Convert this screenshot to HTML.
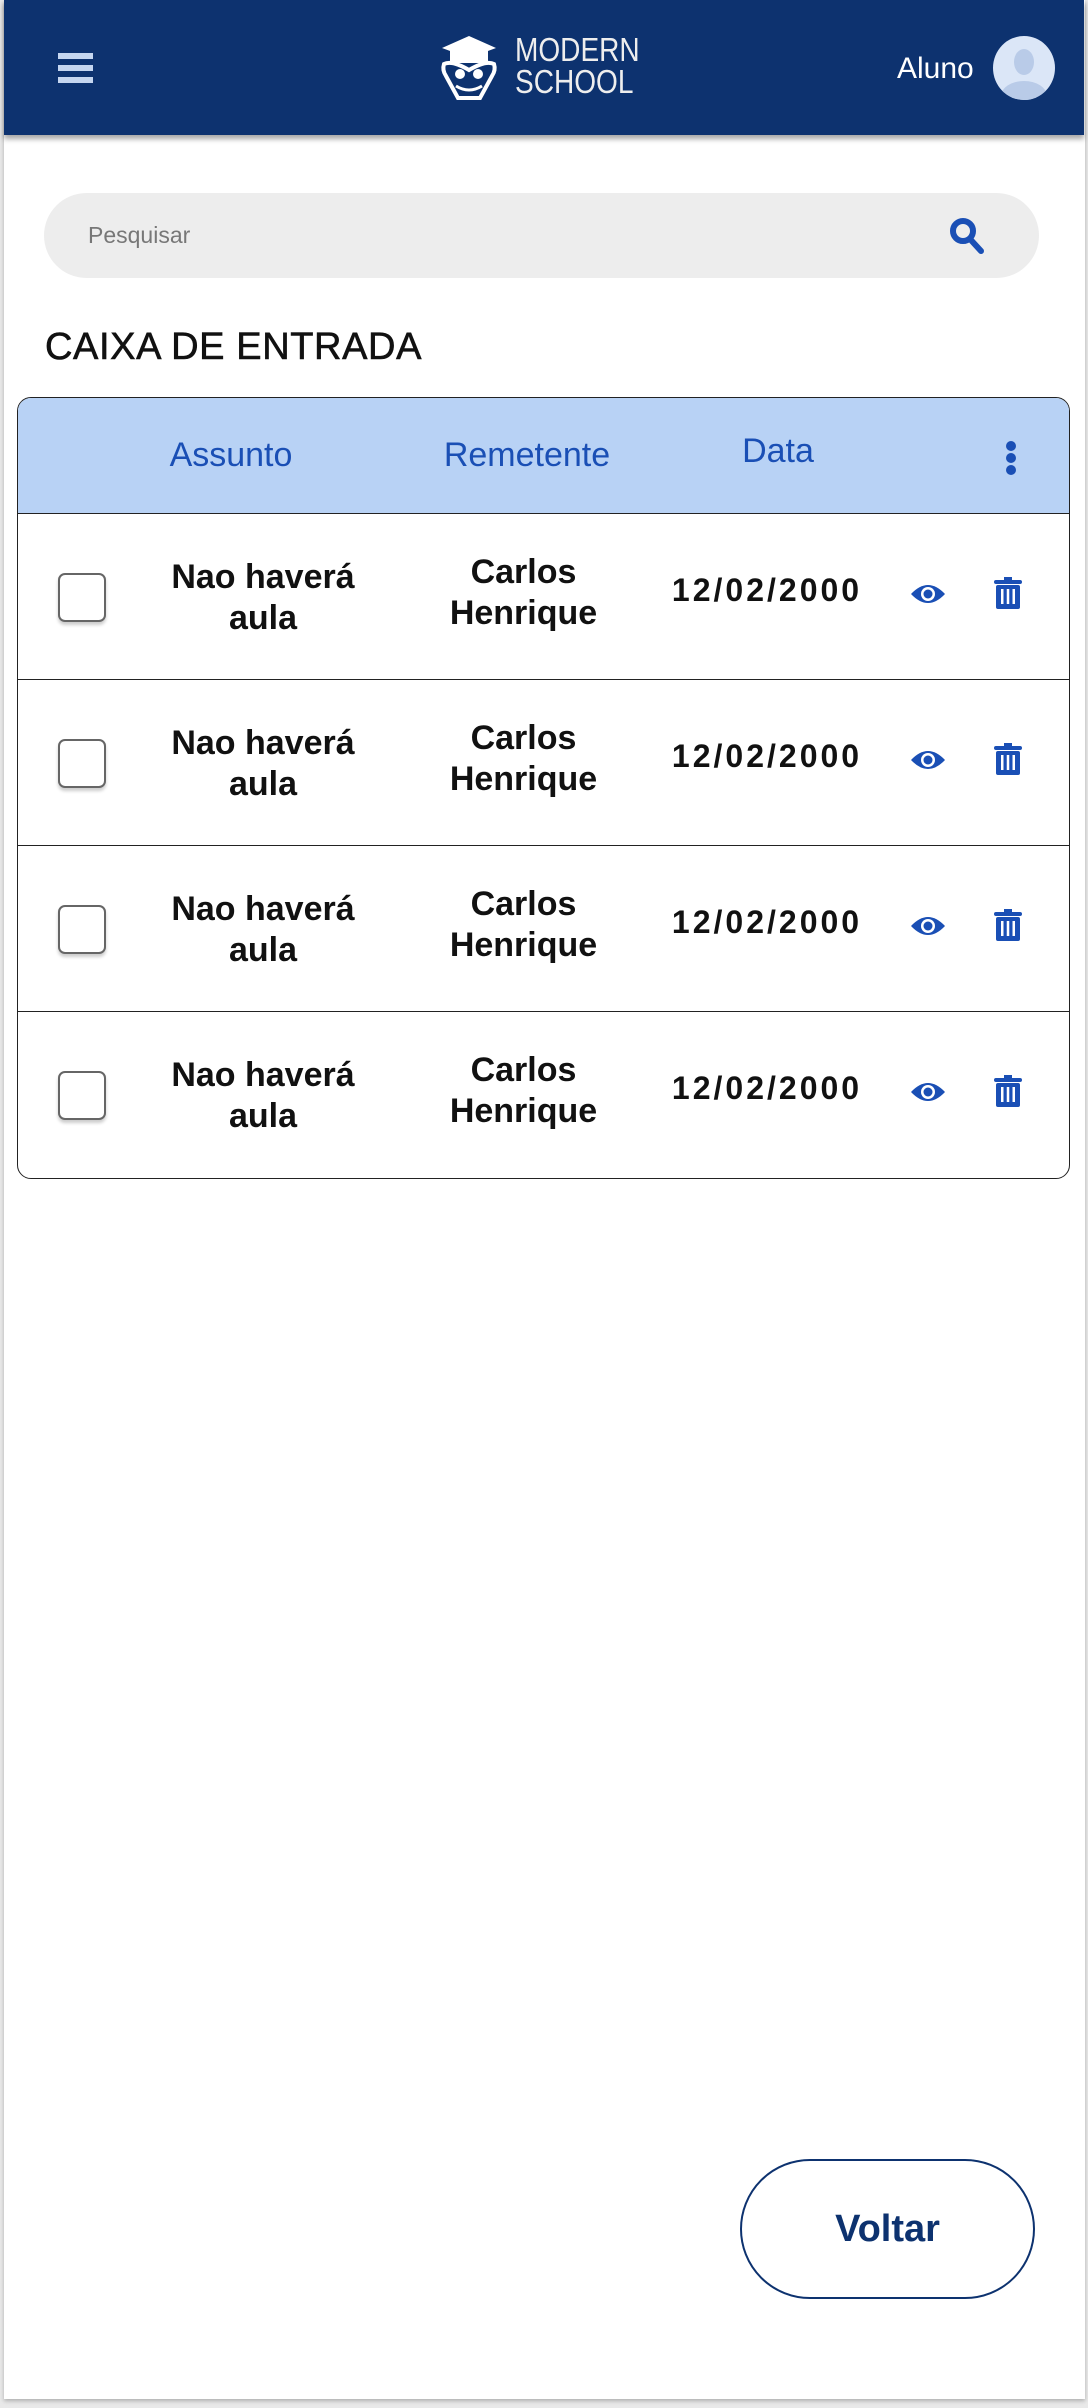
<!DOCTYPE html>
<html><head><meta charset="utf-8"><style>
*{margin:0;padding:0;box-sizing:border-box}
body{width:1088px;height:2408px;background:#e9e9e9;position:relative;overflow:hidden;font-family:"Liberation Sans",sans-serif}
.page{position:absolute;left:4px;top:0;width:1081px;height:2399px;background:#fff;box-shadow:0 2px 4px rgba(0,0,0,.25)}
.hdr{position:absolute;left:4px;top:0;width:1080px;height:135px;background:#0d326f;box-shadow:0 4px 5px rgba(0,0,0,.35)}
.abs{position:absolute}
.row{position:absolute;left:17px;width:1053px;height:166px;border-top:1.5px solid #222}
.cb{position:absolute;left:41px;top:59px;width:48px;height:49px;border:2px solid #666;border-radius:7px;box-shadow:0 3px 3px rgba(0,0,0,.2);background:#fff}
.t{position:absolute;text-align:center;font-size:34px;font-weight:bold;line-height:41px;color:#111}
.d{position:absolute;left:630px;width:240px;top:58px;text-align:center;font-size:32px;font-weight:bold;letter-spacing:3px;color:#111}
</style></head><body>
<div class="page"></div>
<div class="hdr"></div>
<div class="abs" style="left:58px;top:53px;width:35px;height:6px;background:#c5d6f0"></div>
<div class="abs" style="left:58px;top:65px;width:35px;height:6px;background:#c5d6f0"></div>
<div class="abs" style="left:58px;top:77px;width:35px;height:6px;background:#c5d6f0"></div>
<svg class="abs" style="left:438px;top:34px" width="62" height="66" viewBox="0 0 62 66">
<path d="M31 2 L58 14 L31 24 L4 14Z" fill="#fff"/><rect x="12" y="17" width="38" height="12" fill="#fff"/>
<path d="M6 30 Q4 36 8 42 L20 64 L42 64 L54 42 Q58 36 56 30 Q48 26 31 36 Q14 26 6 30Z" fill="none" stroke="#fff" stroke-width="4"/>
<circle cx="22" cy="40" r="5" fill="#fff"/><circle cx="40" cy="40" r="5" fill="#fff"/>
<path d="M18 52 Q31 60 44 52" fill="none" stroke="#fff" stroke-width="3"/></svg>
<div class="abs" style="left:515px;top:34px;color:#eee;font-size:33px;line-height:32px;transform:scaleX(.85);transform-origin:left">MODERN<br>SCHOOL</div>
<div class="abs" style="left:897px;top:52px;color:#fff;font-size:30px">Aluno</div>
<div class="abs" style="left:993px;top:36px;width:62px;height:64px;border-radius:50%;background:#dbe6f7;overflow:hidden">
<div class="abs" style="left:21px;top:13px;width:20px;height:26px;border-radius:50%;background:#b9cbe8"></div>
<div class="abs" style="left:8px;top:45px;width:46px;height:30px;border-radius:50%;background:#b9cbe8"></div></div>
<div class="abs" style="left:44px;top:193px;width:995px;height:85px;border-radius:43px;background:#ededed"></div>
<div class="abs" style="left:88px;top:222px;font-size:23px;color:#777">Pesquisar</div>
<svg class="abs" style="left:948px;top:216px" width="38" height="40" viewBox="0 0 38 40"><circle cx="15" cy="15" r="10" fill="none" stroke="#1a4fb5" stroke-width="6"/><path d="M22 23 L33 35" stroke="#1a4fb5" stroke-width="6" stroke-linecap="round"/></svg>
<div class="abs" style="left:45px;top:326px;font-size:38px;letter-spacing:0.6px;color:#111;-webkit-text-stroke:0.6px #111">CAIXA DE ENTRADA</div>
<div class="abs" style="left:17px;top:397px;width:1053px;height:782px;border:1.5px solid #222;border-radius:14px;overflow:hidden">
<div class="abs" style="left:0;top:0;width:1053px;height:116px;background:#b8d2f5"></div>
</div>
<div class="abs" style="left:121px;top:436px;width:220px;text-align:center;font-size:34px;color:#1a4fb5">Assunto</div>
<div class="abs" style="left:407px;top:436px;width:240px;text-align:center;font-size:34px;color:#1a4fb5">Remetente</div>
<div class="abs" style="left:698px;top:432px;width:160px;text-align:center;font-size:34px;color:#1a4fb5">Data</div>
<div class="abs" style="left:1006px;top:441px;width:10px;height:10px;border-radius:50%;background:#1a4fb5"></div>
<div class="abs" style="left:1006px;top:453px;width:10px;height:10px;border-radius:50%;background:#1a4fb5"></div>
<div class="abs" style="left:1006px;top:465px;width:10px;height:10px;border-radius:50%;background:#1a4fb5"></div>

<div class="row" style="top:513px"><div class="cb"></div><div class="t" style="left:140px;width:212px;top:43px">Nao haverá<br>aula</div><div class="t" style="left:400px;width:213px;top:38px">Carlos<br>Henrique</div><div class="d">12/02/2000</div>
<svg class="abs" style="left:893px;top:68px" width="36" height="24" viewBox="0 0 36 24"><path d="M1 12 Q18 -6 35 12 Q18 30 1 12Z" fill="#1a4fb5"/><circle cx="18" cy="12" r="7" fill="#fff"/><circle cx="18" cy="12" r="4.5" fill="#1a4fb5"/></svg>
<svg class="abs" style="left:977px;top:63px" width="28" height="32" viewBox="0 0 28 32"><rect x="0" y="3" width="28" height="4" rx="2" fill="#1a4fb5"/><rect x="10" y="0" width="8" height="4" fill="#1a4fb5"/><rect x="2" y="8" width="24" height="24" rx="2" fill="#1a4fb5"/><rect x="7" y="12" width="2.5" height="15" fill="#fff"/><rect x="12.75" y="12" width="2.5" height="15" fill="#fff"/><rect x="18.5" y="12" width="2.5" height="15" fill="#fff"/></svg></div>

<div class="row" style="top:679px"><div class="cb"></div><div class="t" style="left:140px;width:212px;top:43px">Nao haverá<br>aula</div><div class="t" style="left:400px;width:213px;top:38px">Carlos<br>Henrique</div><div class="d">12/02/2000</div>
<svg class="abs" style="left:893px;top:68px" width="36" height="24" viewBox="0 0 36 24"><path d="M1 12 Q18 -6 35 12 Q18 30 1 12Z" fill="#1a4fb5"/><circle cx="18" cy="12" r="7" fill="#fff"/><circle cx="18" cy="12" r="4.5" fill="#1a4fb5"/></svg>
<svg class="abs" style="left:977px;top:63px" width="28" height="32" viewBox="0 0 28 32"><rect x="0" y="3" width="28" height="4" rx="2" fill="#1a4fb5"/><rect x="10" y="0" width="8" height="4" fill="#1a4fb5"/><rect x="2" y="8" width="24" height="24" rx="2" fill="#1a4fb5"/><rect x="7" y="12" width="2.5" height="15" fill="#fff"/><rect x="12.75" y="12" width="2.5" height="15" fill="#fff"/><rect x="18.5" y="12" width="2.5" height="15" fill="#fff"/></svg></div>

<div class="row" style="top:845px"><div class="cb"></div><div class="t" style="left:140px;width:212px;top:43px">Nao haverá<br>aula</div><div class="t" style="left:400px;width:213px;top:38px">Carlos<br>Henrique</div><div class="d">12/02/2000</div>
<svg class="abs" style="left:893px;top:68px" width="36" height="24" viewBox="0 0 36 24"><path d="M1 12 Q18 -6 35 12 Q18 30 1 12Z" fill="#1a4fb5"/><circle cx="18" cy="12" r="7" fill="#fff"/><circle cx="18" cy="12" r="4.5" fill="#1a4fb5"/></svg>
<svg class="abs" style="left:977px;top:63px" width="28" height="32" viewBox="0 0 28 32"><rect x="0" y="3" width="28" height="4" rx="2" fill="#1a4fb5"/><rect x="10" y="0" width="8" height="4" fill="#1a4fb5"/><rect x="2" y="8" width="24" height="24" rx="2" fill="#1a4fb5"/><rect x="7" y="12" width="2.5" height="15" fill="#fff"/><rect x="12.75" y="12" width="2.5" height="15" fill="#fff"/><rect x="18.5" y="12" width="2.5" height="15" fill="#fff"/></svg></div>

<div class="row" style="top:1011px"><div class="cb"></div><div class="t" style="left:140px;width:212px;top:43px">Nao haverá<br>aula</div><div class="t" style="left:400px;width:213px;top:38px">Carlos<br>Henrique</div><div class="d">12/02/2000</div>
<svg class="abs" style="left:893px;top:68px" width="36" height="24" viewBox="0 0 36 24"><path d="M1 12 Q18 -6 35 12 Q18 30 1 12Z" fill="#1a4fb5"/><circle cx="18" cy="12" r="7" fill="#fff"/><circle cx="18" cy="12" r="4.5" fill="#1a4fb5"/></svg>
<svg class="abs" style="left:977px;top:63px" width="28" height="32" viewBox="0 0 28 32"><rect x="0" y="3" width="28" height="4" rx="2" fill="#1a4fb5"/><rect x="10" y="0" width="8" height="4" fill="#1a4fb5"/><rect x="2" y="8" width="24" height="24" rx="2" fill="#1a4fb5"/><rect x="7" y="12" width="2.5" height="15" fill="#fff"/><rect x="12.75" y="12" width="2.5" height="15" fill="#fff"/><rect x="18.5" y="12" width="2.5" height="15" fill="#fff"/></svg></div>

<div class="abs" style="left:740px;top:2159px;width:295px;height:140px;border:2.5px solid #0d326f;border-radius:70px;display:flex;align-items:center;justify-content:center;font-size:38px;font-weight:bold;color:#0d326f">Voltar</div>
</body></html>
